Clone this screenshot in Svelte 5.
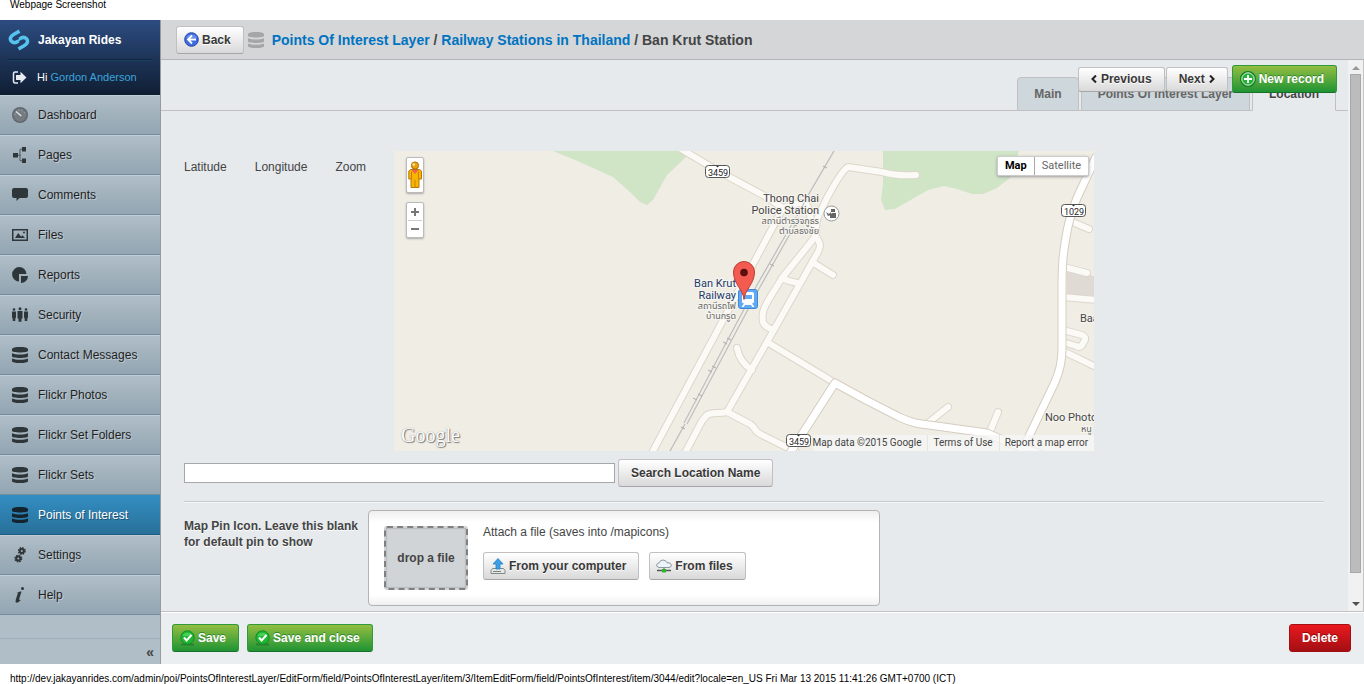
<script>
  const menu = [
    { label: 'Dashboard', icon: 'gauge' },
    { label: 'Pages', icon: 'tree' },
    { label: 'Comments', icon: 'bubble' },
    { label: 'Files', icon: 'picture' },
    { label: 'Reports', icon: 'pie' },
    { label: 'Security', icon: 'people' },
    { label: 'Contact Messages', icon: 'db' },
    { label: 'Flickr Photos', icon: 'db' },
    { label: 'Flickr Set Folders', icon: 'db' },
    { label: 'Flickr Sets', icon: 'db' },
    { label: 'Points of Interest', icon: 'db' },
    { label: 'Settings', icon: 'gears' },
    { label: 'Help', icon: 'info' }
  ];
  let current = $state('Points of Interest');
  let query = $state('');

  const minorRoads = [
    'M287-2L324 20L369 44L389 57L259 300',
    'M389 57C396 54 402 52 408 52C418 53 414 66 421 84C427 93 427 95 424 101L373 191L333 261C325 263 318 261 313 264L308 270L291 302',
    'M333 261L356 273C361 276 360 280 366 283L402 301',
    'M343 197C345 208 350 214 358 219',
    'M522 24C508 25 499 24 488 21L454 16C447 20 438 38 433 47L423 68L421 86L388 127L375 148C368 160 368 164 369 171C371 177 375 176 379 179',
    'M388 127C394 131 398 130 403 132',
    'M418 111L439 124',
    'M373 191L441 232',
    'M676 70L695 78',
    'M670 116L693 122',
    'M669 146L702 149',
    'M669 179L688 184Q692 186 691 189L688 194Q686 197 682 195L669 191',
    'M669 200L702 216',
    'M534 272L554 256',
    'M595 283L604 261'
  ];
  const majorRoads = [
    'M396 302L441 232L470 248L505 266C518 272 525 273 535 274L593 282L613 291L646 303',
    'M702 6L683 47C677 62 674 73 672 86C669 103 668 112 668 140V200C667 213 666 219 661 231L627 302'
  ];
  const shields = [
    { x: 311, y: 14, n: '3459' },
    { x: 667, y: 53, n: '1029' },
    { x: 392, y: 283, n: '3459' }
  ];
  const ties = [[431, 16], [401, 74], [378, 114], [331, 192], [335, 188], [316, 220], [320, 216], [301, 248], [306, 244], [289, 277]];
</script>

{#snippet icon(name)}
  <svg class="icon" width="16" height="16" viewBox="0 0 16 16" aria-hidden="true">
    {#if name === 'db'}
      <path d="M0 2.2C0 .6 4 0 8 0s8 .6 8 2.2v1.6C16 5 12.500 5.500 8 5.500S0 5 0 3.800zM0 6.200c2 1 5 1.200 8 1.200s6-.2 8-1.200v3c0 1.100-3.500 1.700-8 1.700S0 10.300 0 9.200zM0 11.600c2 1 5 1.200 8 1.200s6-.2 8-1.200v2.300C16 15.300 12.500 16 8 16s-8-.7-8-2.100z" />
    {:else if name === 'gauge'}
      <circle cx="8" cy="8" r="8" fill="#61686d" /><circle cx="8" cy="8" r="6.500" fill="#747c81" />
      <path d="M3 8a5 5 0 0 1 10 0" fill="none" stroke="#b4bcc2" stroke-width="1" stroke-dasharray="1 2" />
      <path d="M4 4.500L9.300 9" stroke="#dde2e5" stroke-width="1.500" />
    {:else if name === 'tree'}
      <path d="M1 6h5v4.500H1zM10 0h4v4.500h-4zM10 11.500h4V16h-4z" /><path d="M6 8.200h2.500M10.500 2.200H8v11.500h2.500" fill="none" stroke="#50575c" />
    {:else if name === 'bubble'}
      <path d="M2 1h12q2 0 2 2v6q0 2-2 2H7.500L4.500 14v-3H2q-2 0-2-2V3q0-2 2-2z" />
    {:else if name === 'picture'}
      <path d="M0 2h16v12H0zM1.500 3.500v9h13v-9z" fill-rule="evenodd" /><path d="M3 11l3.200-5L9 9.500l1.500-1.300L13 11z" /><circle cx="12" cy="5.500" r="1" />
    {:else if name === 'pie'}
      <path d="M7 7h7.500A7.200 7.200 0 1 0 7 14.500zM9 9h7a7 7 0 0 1-7 7z" />
    {:else if name === 'people'}
      <circle cx="2" cy="2.500" r="1.300" /><circle cx="8" cy="1.800" r="1.500" /><circle cx="14" cy="2.500" r="1.300" />
      <path d="M0 4.500h4v6l-.7 1V14H.7v-2.500l-.7-1zM5.500 4h5v7l-1 1v2.700h-3V12l-1-1zM12 4.500h4v6l-.7 1V14h-2.600v-2.500l-.7-1z" />
    {:else if name === 'gears'}
      <g fill="none" stroke="#2f363a"><circle cx="9.800" cy="4" r="2" stroke-width="2" /><circle cx="9.800" cy="4" r="3.200" stroke-width="1.600" stroke-dasharray="1.500 1.010" />
      <circle cx="6.300" cy="11.600" r="2" stroke-width="2" /><circle cx="6.300" cy="11.600" r="3.200" stroke-width="1.600" stroke-dasharray="1.500 1.010" /></g>
    {:else if name === 'info'}
      <circle cx="10.500" cy="1.500" r="1.500" /><path d="M5 6q2-2 4.500-1.500L7.200 12q-.2 1.500 1.800.8Q6.500 16 4.500 15.800 3 15 3.800 12.500L5.800 6.500z" />
    {/if}
  </svg>
{/snippet}

{#snippet check()}
  <svg class="glyph" width="15" height="16" viewBox="0 0 15 16" aria-hidden="true">
    <path d="M1 14.500h13" stroke="#187030" stroke-width="2" opacity=".6" />
    <circle cx="7.500" cy="7.500" r="6.700" fill="#1db82f" stroke="#178a29" /><path d="M2.500 6a5.500 5.500 0 0 1 10 0z" fill="#66de76" opacity=".6" />
    <path d="M4 7.500l2.600 3L11.500 5" fill="none" stroke="#fff" stroke-width="2" />
  </svg>
{/snippet}

<div class="page">
  <p class="caption">Webpage Screenshot</p>

  <div class="app">
    <aside>
      <div class="brand">
        <a class="title" href="#home">
          <svg width="22" height="22" viewBox="0 0 22 22" aria-hidden="true">
            <g fill="none" stroke="#55c3ee" stroke-width="3.600">
              <path d="M11.500 2.200L6 5.200C2 7.500 1.500 10 3.500 12.300C5.500 14.300 8 13.800 10.500 11.800" />
              <path d="M10.500 20L16 16.800C20 14.300 20.300 12 18.500 9.700C16.500 7.800 14 8.200 11.500 10.200" />
            </g>
            <path d="M8.500 13.200L13.500 8.800" stroke="#55c3ee" stroke-width="2" />
          </svg>
          Jakayan Rides
        </a>
        <div class="user">
          <svg width="16" height="13" viewBox="0 0 16 13" aria-hidden="true">
            <path d="M6 1H3Q1.500 1 1.500 3v7q0 2 1.500 2h3" fill="none" stroke="#e8ecf2" stroke-width="1.500" /><path d="M4 4h4.500V.8L14.500 6.500 8.500 12.200V9H4z" fill="#e8ecf2" />
          </svg>
          <span>Hi <a href="#profile">Gordon Anderson</a></span>
        </div>
      </div>
      <nav>
        {#each menu as item}
          <a href="#menu" class:current={item.label === current} onclick={() => (current = item.label)}>
            {@render icon(item.icon)}{item.label}
          </a>
        {/each}
      </nav>
      <button class="collapse" aria-label="Collapse menu">«</button>
    </aside>

    <main>
      <header>
        <button class="btn back">
          <svg class="glyph" width="15" height="16" viewBox="0 0 15 16" aria-hidden="true">
            <circle cx="7.500" cy="7.500" r="6.800" fill="#3d6be0" stroke="#2746a5" /><path d="M2 6a6 6 0 0 1 11 0z" fill="#84a5f2" opacity=".6" />
            <path d="M8 3.500L4 7.500l4 4M4.500 7.500H12" fill="none" stroke="#fff" stroke-width="1.800" />
          </svg>
          Back
        </button>
        <span class="crumb-icon">{@render icon('db')}</span>
        <h1><a href="#layer">Points Of Interest Layer</a> / <a href="#stations">Railway Stations in Thailand</a> / Ban Krut Station</h1>
      </header>

      <div class="panel">
        <div class="body">
          <div class="tabs">
            <a href="#main">Main</a>
            <a href="#layer">Points Of Interest Layer</a>
            <a href="#location" class="active">Location</a>
          </div>
          <div class="record-actions">
            <button class="btn small"><svg width="6" height="8" viewBox="0 0 6 8" aria-hidden="true"><path d="M5 .5L1.500 4L5 7.500" /></svg>Previous</button>
            <button class="btn small">Next<svg width="6" height="8" viewBox="0 0 6 8" aria-hidden="true"><path d="M1 .5L4.500 4L1 7.500" /></svg></button>
            <button class="btn green new">
              <svg class="glyph" width="16" height="16" viewBox="0 0 16 16" aria-hidden="true">
                <circle cx="8" cy="8" r="7" fill="#1fb532" stroke="#157a26" stroke-width="2" /><circle cx="8" cy="8" r="6.200" fill="none" stroke="#e8f7ea" />
                <path d="M8 4v8M4 8h8" stroke="#fff" stroke-width="2" />
              </svg>
              New record
            </button>
          </div>

          <div class="fields">
            <div class="location">
              <span>Latitude</span><span>Longitude</span><span>Zoom</span>
              <div class="map">
                <svg class="canvas" width="700" height="300" viewBox="0 0 700 300" role="img" aria-label="Map of Ban Krut">
                  <path d="M159 0L181 9L219 26L236 41L246 51L253 54L259 49L273 24L293 5L288 0zM489 0V32L487 49L491 59L501 58L534 39L550 35L563 38L578 43H589L603 37L616 27L625 0z" fill="#d0e4c6" />
                  <path d="M673 121L693 124L700 125V147L673 145z" fill="#dfdad3" />
                  <g fill="none" stroke-linecap="round" stroke-linejoin="round">
                    {#each minorRoads as d}<path {d} stroke="#ddd6cb" stroke-width="8" />{/each}
                    {#each minorRoads as d}<path {d} stroke="#fbfaf6" stroke-width="6" />{/each}
                    {#each majorRoads as d}<path {d} stroke="#d6cdc1" stroke-width="9" />{/each}
                    {#each majorRoads as d}<path {d} stroke="#fff" stroke-width="7" />{/each}
                  </g>
                  <g fill="none" stroke="#bdbdbd">
                    <path d="M440 0L416 41L403 65M291 273L276 300" stroke-width="1.300" />
                    <path d="M402 66L363 134L332 192L290 272M405 67L366 136L335 194L293 273" stroke-width="1.200" />
                    {#each ties as [x, y]}<path d="M{x - 2} {y - 1}l4 2" stroke="#aaa" />{/each}
                  </g>
                  <g class="label">
                    <text x="425" y="51" text-anchor="end">Thong Chai</text>
                    <text x="425" y="63" text-anchor="end">Police Station</text>
                    <text class="thai" x="425" y="73" text-anchor="end">สถานีตำรวจภูธร</text>
                    <text class="thai" x="425" y="83" text-anchor="end">ตำบลธงชัย</text>
                    <text class="rail" x="342" y="136" text-anchor="end">Ban Krut</text>
                    <text class="rail" x="342" y="148" text-anchor="end">Railway</text>
                    <text class="thai" x="342" y="158" text-anchor="end">สถานีรถไฟ</text>
                    <text class="thai" x="342" y="168" text-anchor="end">บ้านกรูด</text>
                    <text x="686" y="171">Baa</text>
                    <text x="651" y="270">Noo Photo</text>
                    <text class="thai" x="687" y="281">หนู</text>
                  </g>
                  <circle cx="437.500" cy="62.500" r="7.500" fill="#fff" stroke="#9a9a9a" />
                  <path d="M437 58h4v3h-4zM438 62h4v5h-6v-3zM432 61l3 2 2-2v3l-3 1z" fill="#666" />
                  {#each shields as s}
                    <rect x={s.x + .5} y={s.y + .5} width="24" height="12" rx="3" fill="#fff" stroke="#555" />
                    <path d="M{s.x + 11} {s.y + 1}l1.500 1.500l1.500-1.500" fill="#333" />
                    <text class="shield" x={s.x + 13} y={s.y + 11} text-anchor="middle">{s.n}</text>
                  {/each}
                  <rect x="344.500" y="138.500" width="19" height="19" rx="2.500" fill="#5faaf3" stroke="#4288d2" />
                  <path d="M350 141h8q2 0 2 2v8q0 1-2 1.500l2.500 3.500h-2.300l-1.200-2h-6l-1.200 2h-2.300l2.500-3.500q-2-.5-2-1.500v-8q0-2 2-2zM350 144v4h8v-4z" fill="#fff" fill-rule="evenodd" />
                  <path d="M350 148.500C349.500 139 339.500 133 339.500 121a10.500 10.500 0 0 1 21 0C360.500 133 350.500 139 350 148.500z" fill="#f35a50" stroke="#bb3c32" />
                  <circle cx="350" cy="121.500" r="3.800" fill="#5c0f0f" />
                </svg>
                <button class="pegman" aria-label="Street View">
                  <svg width="14" height="29" viewBox="0 0 14 29" aria-hidden="true">
                    <path d="M2.500 8.500h9l2 1.500v8h-2.500v8.500h-8V18H.8v-8z" fill="#f8b500" stroke="#b87510" /><path d="M3.500 9h7L7 13z" fill="#f7604e" />
                    <path d="M3.500 10.500v8M10.500 10.500v8M7 19v7.500" stroke="#c98207" /><circle cx="7" cy="4.500" r="3.600" fill="#e9a20b" stroke="#a9700f" /><circle cx="5.800" cy="3.500" r="1.300" fill="#ffe7a0" />
                  </svg>
                </button>
                <div class="zoom">
                  <button aria-label="Zoom in"><svg width="10" height="10" viewBox="0 0 10 10"><path d="M5 1v8M1 5h8" /></svg></button>
                  <button aria-label="Zoom out"><svg width="10" height="10" viewBox="0 0 10 10"><path d="M1 5h8" /></svg></button>
                </div>
                <div class="types"><button class="on">Map</button><button>Satellite</button></div>
                <span class="google">Google</span>
                <div class="credits"><span>Map data ©2015 Google</span><a href="#terms">Terms of Use</a><a href="#report">Report a map error</a></div>
              </div>
            </div>

            <div class="search">
              <input type="text" aria-label="Location name" bind:value={query} />
              <button class="btn">Search Location Name</button>
            </div>

            <div class="upload-field">
              <h2>Map Pin Icon. Leave this blank for default pin to show</h2>
              <div class="upload">
                <div class="drop"><span>drop a file</span></div>
                <div class="attach">
                  <p>Attach a file (saves into /mapicons)</p>
                  <div class="sources">
                    <button class="btn source">
                      <svg class="glyph" width="16" height="16" viewBox="0 0 16 16" aria-hidden="true">
                        <path d="M2.500 10.500h11l1.500 2v3H1v-3z" fill="#e5e8e6" stroke="#7d8a86" /><path d="M3 13.500h8" stroke="#77847f" />
                        <path d="M8 .5L13 6h-3v5H6V6H3z" fill="#3ca0e6" stroke="#2b7ec4" stroke-width=".8" />
                      </svg>
                      From your computer
                    </button>
                    <button class="btn source">
                      <svg class="glyph" width="16" height="16" viewBox="0 0 16 16" aria-hidden="true">
                        <path d="M1 12.500h14" stroke="#4b5a50" stroke-width="1.500" /><path d="M8 9v4" stroke="#4b5a50" /><rect x="6" y="11" width="4" height="3.500" fill="#2eb52c" />
                        <path d="M3 9.500Q.5 9 .6 7 1 5 3.300 4.800 4 2 7 2q3 0 4 2.700 4-.2 4.400 2.300 0 2.200-2.400 2.500z" fill="#eef3f8" stroke="#8797a5" />
                      </svg>
                      From files
                    </button>
                  </div>
                </div>
              </div>
            </div>
          </div>
        </div>
        <div class="scrollbar" aria-hidden="true"><i class="up"></i><b></b><i class="down"></i></div>
      </div>

      <footer>
        <button class="btn green">{@render check()}Save</button>
        <button class="btn green">{@render check()}Save and close</button>
        <button class="btn red">Delete</button>
      </footer>
    </main>
  </div>

  <p class="caption url">http://dev.jakayanrides.com/admin/poi/PointsOfInterestLayer/EditForm/field/PointsOfInterestLayer/item/3/ItemEditForm/field/PointsOfInterest/item/3044/edit?locale=en_US Fri Mar 13 2015 11:41:26 GMT+0700 (ICT)</p>
</div>

<style>
  :global(body) { margin: 0; background: #fff; }
  .page { box-sizing: border-box; min-height: 100vh; display: flex; flex-direction: column; font: 12px/16px "Liberation Sans", Arial, sans-serif; color: #444; }
  .page :global(*) { box-sizing: border-box; }
  p, h1, h2 { margin: 0; }
  a { text-decoration: none; color: inherit; }
  button { font: inherit; color: inherit; cursor: pointer; }
  svg { flex: none; display: block; }
  .caption { flex: none; height: 20px; padding: 0 10px; font-size: 10px; line-height: 10px; color: #000; white-space: nowrap; }
  .url { padding-top: 10px; }
  .app { flex: 1; display: flex; }

  aside { flex: none; width: 160px; display: flex; flex-direction: column; background: #b0bec7; }
  .brand { height: 75px; background: linear-gradient(#2c4c80, #101e33); color: #fff; }
  .title { display: flex; align-items: center; gap: 8px; height: 40px; margin: 0 8px; border-bottom: 1px solid #0f2440; box-shadow: 0 1px 0 #19435f; font-weight: bold; }
  .title svg { margin-left: 0; }
  .user { display: flex; align-items: center; gap: 9px; height: 34px; padding-left: 12px; font-size: 11px; }
  .user a { color: #3ba5db; }
  nav a { display: flex; align-items: center; gap: 10px; height: 40px; padding: 0 12px; border-top: 1px solid #c1cdd4; border-bottom: 1px solid #748d9c; background: linear-gradient(#b0bec7, #92a5b2); color: #1f1f1f; text-shadow: 1px 1px 0 #bfcad2; }
  .icon { fill: #2f363a; }
  nav .current { background: linear-gradient(#338dc1, #287099); border-top-color: #338dc1; border-bottom-color: #1c5c82; color: #fff; text-shadow: 1px 1px 0 #1e5270; }
  .current .icon { fill: #14232e; }
  .collapse { margin-top: auto; height: 26px; padding: 0 6px; border: 0; border-top: 1px solid #9fb0bb; background: none; text-align: right; font-size: 14px; font-weight: bold; line-height: 20px; }

  main { flex: 1; min-width: 0; display: flex; flex-direction: column; border-left: 1px solid #989a9c; background: #e6eaed; }
  header { display: flex; align-items: center; height: 40px; padding-left: 15px; background: #d4d6d8; border-bottom: 1px solid #b3b5b8; }
  h1 { font-size: 14px; line-height: 20px; }
  h1 a { color: #0073c1; }
  .crumb-icon { padding: 0 8px 0 4px; }
  .crumb-icon .icon { fill: #a5a6a8; }

  .btn { display: flex; align-items: center; justify-content: center; gap: 4px; height: 28px; padding: 0 12px; border: 1px solid #c0c0c2; border-bottom-color: #a6a6a8; border-radius: 3px; background: linear-gradient(#fff, #d9d9d9); font-weight: bold; color: #393939; white-space: nowrap; text-shadow: 0 1px 0 #fff; }
  .back { gap: 3px; padding: 0 12px 0 7px; }
  .small { height: 25px; }
  .small svg { fill: none; stroke: #222; stroke-width: 2; }
  .green { gap: 3px; padding: 0 12px 0 7px; background: linear-gradient(#93be42, #1f9433); border-color: #2f9a3a; border-bottom-color: #18702a; color: #fff; text-shadow: 0 -1px 0 #35852f; }
  .red { margin-left: auto; background: linear-gradient(#e9191f, #a30e13); border-color: #a30f13; color: #fff; text-shadow: 0 -1px 0 #8b0a0e; }

  .panel { flex: 1; display: flex; }
  .body { flex: 1; min-width: 0; position: relative; }
  .tabs { display: flex; justify-content: flex-end; gap: 2px; height: 51px; padding: 17px 12px 0 0; border-bottom: 1px solid #c0c0c2; }
  .tabs a { height: 34px; padding: 8px 16px; border: 1px solid #c0c0c2; border-radius: 4px 4px 0 0; background: #ced7dc; font-weight: bold; color: #666; }
  .tabs .active { background: #e6eaed; border-bottom-color: #e6eaed; color: #444; }
  .record-actions { position: absolute; top: 5px; right: 11px; display: flex; align-items: center; gap: 1px; }
  .record-actions .new { margin-left: 3px; }

  .fields { padding: 40px 24px 5px 23px; }
  .location { display: flex; gap: 28px; }
  .location > span { padding-top: 8px; }
  .map { position: relative; flex: 0 0 700px; height: 300px; overflow: hidden; background: #f0ede5; font-family: Roboto, sans-serif; }
  .label text { font: 11px Roboto, sans-serif; fill: #444; stroke: #f7f5f0; stroke-width: 2px; paint-order: stroke; }
  .label .rail { fill: #1d3a6b; }
  .label .thai { font: 9px "Noto Sans Thai", "Noto Sans", sans-serif; fill: #666; }
  .shield { font: 9px Roboto, sans-serif; fill: #222; }
  .pegman, .zoom, .types, .credits, .google { position: absolute; }
  .pegman { top: 6px; left: 12px; width: 18px; height: 36px; padding: 2px 1px; border: 1px solid #bbb; border-radius: 2px; background: #fff; box-shadow: 0 1px 2px #aaa; }
  .zoom { top: 51px; left: 12px; width: 18px; padding: 0 1px; border: 1px solid #bbb; border-radius: 2px; background: #fff; box-shadow: 0 1px 2px #aaa; }
  .zoom button { display: flex; align-items: center; justify-content: center; width: 100%; height: 17px; padding: 0; border: 0; background: none; }
  .zoom button + button { border-top: 1px solid #ccc; }
  .zoom path { stroke: #777; stroke-width: 2; }
  .types { top: 5px; right: 5px; display: flex; height: 20px; background: #fff; border: 1px solid #ccc; border-radius: 2px; box-shadow: 0 1px 3px #999; }
  .types button { padding: 0 7px; border: 0; background: none; font-size: 11px; color: #666; }
  .types .on { font-weight: bold; color: #000; border-right: 1px solid #aaa; }
  .google { left: 7px; bottom: 5px; font: 20px/22px "Liberation Serif", serif; color: #fff; text-shadow: 1px 1px 1px #777, 0 0 1px #888; }
  .credits { right: 0; bottom: 0; display: flex; height: 16px; padding-right: 6px; gap: 6px; background: rgba(245, 245, 245, .75); font-size: 10px; line-height: 16px; }
  .credits a { padding-left: 5px; border-left: 1px solid #e8e5de; }

  .search { display: flex; align-items: center; gap: 3px; padding: 8px 0 14px; border-bottom: 1px solid #c8ccd0; box-shadow: 0 1px 0 #f4f6f7; }
  .search input { width: 431px; height: 20px; padding: 0 4px; border: 1px solid #a5a7a9; background: #fff; font: inherit; }
  .upload-field { display: flex; padding-top: 8px; }
  h2 { width: 184px; padding: 8px 8px 0 0; font-size: 12px; line-height: 16px; text-shadow: 0 1px 0 #fff; }
  .upload { display: flex; gap: 15px; width: 512px; padding: 15px; border: 1px solid #b3b3b3; border-radius: 4px; background: linear-gradient(#efefef, #fff 11px, #fff 84px, #efefef); }
  .drop { width: 84px; height: 64px; border: 2px dashed #808080; border-radius: 3px; background: #d0d4d7; }
  .drop span { display: flex; align-items: center; justify-content: center; height: 100%; font-weight: bold; box-shadow: inset 0 0 2px #808080; }
  .attach p { padding-bottom: 14px; line-height: 12px; }
  .sources { display: flex; gap: 10px; }
  .source { gap: 3px; padding: 0 12px 0 6px; }

  .scrollbar { flex: none; width: 16px; display: flex; flex-direction: column; align-items: center; justify-content: space-between; background: #f1f1f1; border-right: 1px solid #c4c4c4; padding: 6px 2px 5px; }
  .scrollbar b { flex: 1; width: 11px; margin: 4px 0 29px; background: #bcbcbc; border: 1px solid #a8a8a8; }
  .scrollbar i { border: 4px solid transparent; }
  .scrollbar .up { border-top: 0; border-bottom-color: #999; }
  .scrollbar .down { border-bottom: 0; border-top-color: #505050; }

  footer { display: flex; gap: 8px; align-items: center; height: 53px; padding: 0 13px 0 11px; background: #eaeef1; border-top: 1px solid #c0c2c4; box-shadow: inset 0 1px 0 #fff; }
</style>
